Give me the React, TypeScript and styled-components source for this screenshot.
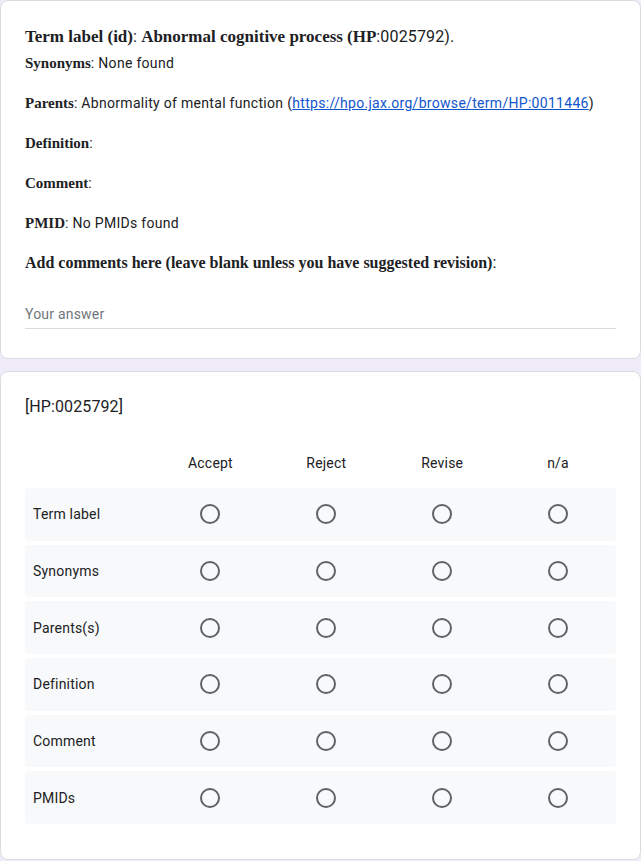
import React from "react";
import styled, { createGlobalStyle } from "styled-components";

const Global = createGlobalStyle`
  html, body { margin: 0; padding: 0; background: #f0ebf8; }
  body { font-family: Roboto, "Liberation Sans", sans-serif; color: #202124; }
`;

const Page = styled.div`
  display: flex;
  flex-direction: column;
  gap: 12px;
  padding-bottom: 40px;
`;

const Card = styled.section<{ $bottom?: number }>`
  background: #fff;
  border: 1px solid #dadce0;
  border-radius: 8px;
  padding: 24px 24px ${(p) => p.$bottom ?? 29}px;
`;

const B = styled.b<{ $size?: number }>`
  font-family: "Liberation Serif", serif;
  font-weight: 700;
  font-size: ${(p) => p.$size ?? 15}px;
  line-height: 1;
  letter-spacing: 0;
`;

const Title = styled.div`
  font-size: 16px;
  line-height: 24px;
  letter-spacing: 0.15px;
`;

const Para = styled.div<{ $gap?: number }>`
  font-size: 14px;
  line-height: 20px;
  margin-top: ${(p) => p.$gap ?? 20}px;
  letter-spacing: 0.3px;
`;

const Link = styled.a`
  color: #1155cc;
  text-decoration: underline;
`;

const Question = styled.div`
  font-size: 16px;
  line-height: 24px;
  margin-top: 18px;
`;

const Answer = styled.div`
  margin-top: 29px;
  font-size: 14px;
  line-height: 20px;
  letter-spacing: 0.2px;
  color: #70757a;
  padding-bottom: 4px;
  border-bottom: 1px solid #dadce0;
`;

const GridTitle = styled.div`
  font-size: 16px;
  line-height: 24px;
  letter-spacing: 0.1px;
  margin-top: -1px;
`;

const Grid = styled.div`
  margin-top: 32px;
  display: flex;
  flex-direction: column;
  gap: 4px;
`;

const Row = styled.div<{ $head?: boolean }>`
  display: grid;
  grid-template-columns: 127.5px repeat(4, 1fr);
  align-items: center;
  height: ${(p) => (p.$head ? 24 : 52.7)}px;
  margin-bottom: ${(p) => (p.$head ? 9 : 0)}px;
  background: ${(p) => (p.$head ? "transparent" : "#f8f9fa")};
  border-radius: 4px;
  font-size: 14px;
  letter-spacing: 0.2px;
`;

const RowLabel = styled.div`
  padding-left: 8px;
`;

const ColHead = styled.div`
  text-align: center;
`;

const Cell = styled.div`
  display: flex;
  justify-content: center;
`;

const Radio = styled.span`
  width: 16px;
  height: 16px;
  border: 2px solid #5f6368;
  border-radius: 50%;
`;

const cols = ["Accept", "Reject", "Revise", "n/a"];
const rows = ["Term label", "Synonyms", "Parents(s)", "Definition", "Comment", "PMIDs"];

export default function App() {
  return (
    <>
      <Global />
      <Page>
        <Card>
          <Title>
            <B $size={17}>Term label (id)</B>: <B $size={17}>Abnormal cognitive process</B>{" "}
            <B $size={17}>(HP</B>:0025792).
          </Title>
          <Para $gap={4}>
            <B>Synonyms</B>: None found
          </Para>
          <Para>
            <B>Parents</B>: Abnormality of mental function (
            <Link href="#">https://hpo.jax.org/browse/term/HP:0011446</Link>)
          </Para>
          <Para>
            <B>Definition</B>:
          </Para>
          <Para>
            <B>Comment</B>:
          </Para>
          <Para>
            <B>PMID</B>: No PMIDs found
          </Para>
          <Question>
            <B $size={16}>Add comments here (leave blank unless you have suggested revision)</B>:
          </Question>
          <Answer>Your answer</Answer>
        </Card>
        <Card $bottom={35}>
          <GridTitle>[HP:0025792]</GridTitle>
          <Grid>
            <Row $head>
              <span />
              {cols.map((c) => (
                <ColHead key={c}>{c}</ColHead>
              ))}
            </Row>
            {rows.map((r) => (
              <Row key={r}>
                <RowLabel>{r}</RowLabel>
                {cols.map((c) => (
                  <Cell key={c}>
                    <Radio />
                  </Cell>
                ))}
              </Row>
            ))}
          </Grid>
        </Card>
      </Page>
    </>
  );
}
